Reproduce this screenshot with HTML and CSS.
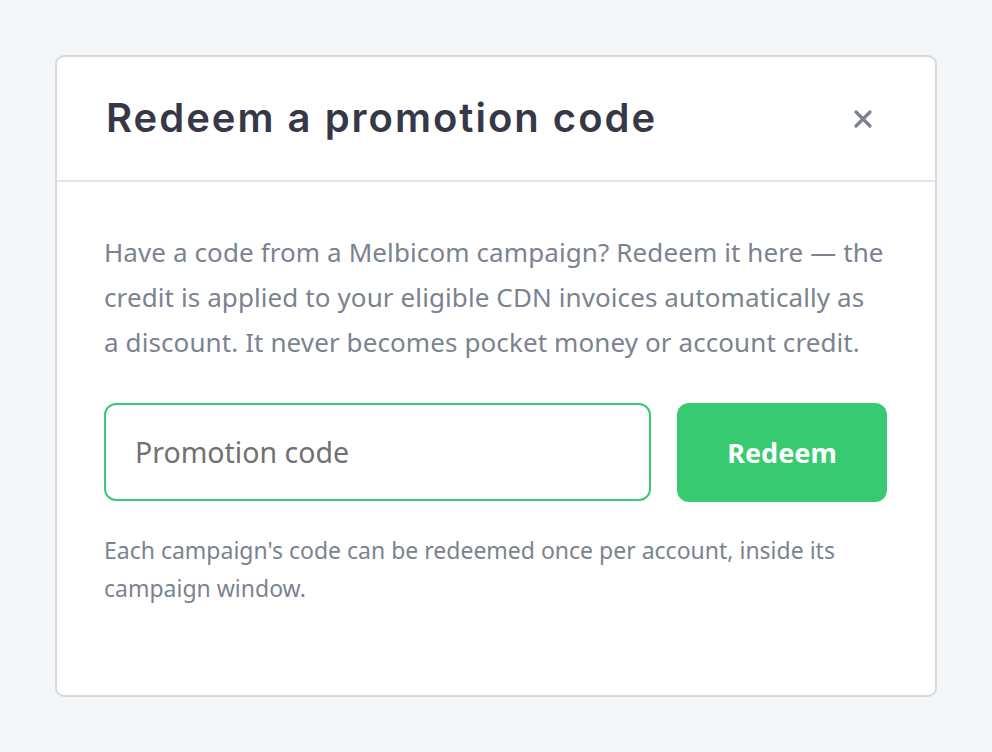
FILE: index.html
```html
<!DOCTYPE html>
<html lang="en">
<head>
<meta charset="utf-8">
<title>Redeem a promotion code</title>
<link rel="stylesheet" href="styles.css">
</head>
<body>
<div class="page">
  <div class="modal">
    <div class="modal-header">
      <h1 class="modal-title">Redeem a promotion code</h1>
      <button class="close-btn" aria-label="Close">
        <svg width="22" height="22" viewBox="0 0 22 22"><path d="M4 4L18 18M18 4L4 18" stroke="#7a808c" stroke-width="3.2" stroke-linecap="round"/></svg>
      </button>
    </div>
    <div class="modal-body">
      <p class="intro">Have a code from a Melbicom campaign? Redeem it here — the credit is applied to your eligible CDN invoices automatically as a&nbsp;discount. It never becomes pocket money or account credit.</p>
      <form class="redeem-form">
        <input class="code-input" type="text" placeholder="Promotion code">
        <button class="redeem-btn" type="button">Redeem</button>
      </form>
      <p class="hint">Each campaign's code can be redeemed once per account, inside its campaign window.</p>
    </div>
  </div>
</div>
</body>
</html>
```
FILE: styles.css
```css
html, body {
  margin: 0;
  padding: 0;
  background: #f5f6f8;
}
.page {
  padding: 55px;
  box-sizing: border-box;
  width: 992px;
  height: 752px;
}
.modal {
  background: #fff;
  border: 2px solid #d5d9e0;
  border-radius: 9px;
  height: 642px;
  box-sizing: border-box;
}
.modal-header {
  height: 125px;
  box-sizing: border-box;
  border-bottom: 2px solid #e3e5ea;
  display: flex;
  align-items: center;
  justify-content: space-between;
  padding: 0 61px 0 49px;
}
.modal-title {
  margin: 0;
  font-family: "Inter", sans-serif;
  font-weight: 600;
  font-size: 40px;
  color: #363848;
  letter-spacing: 2px;
  padding-bottom: 3px;
}
.close-btn {
  border: 0;
  background: none;
  padding: 0;
  width: 22px;
  height: 22px;
  display: flex;
}
.modal-body {
  padding: 48px 48px 0 47px;
  font-family: "Noto Sans", sans-serif;
}
.intro {
  margin: 0;
  font-size: 26px;
  line-height: 45px;
  color: #7b8390;
  letter-spacing: 0.1px;
}
.redeem-form {
  display: flex;
  gap: 26px;
  margin-top: 38px;
}
.code-input {
  flex: 1;
  min-width: 0;
  height: 98px;
  box-sizing: border-box;
  border: 2px solid #3cc971;
  border-radius: 12px;
  padding: 0 29px;
  font-family: "Noto Sans", sans-serif;
  font-size: 28.5px;
  color: #333;
  outline: none;
}
.code-input::placeholder {
  color: #717171;
}
.redeem-btn {
  width: 210px;
  height: 99px;
  border: 0;
  border-radius: 12px;
  background: #37ca70;
  color: #fff;
  font-family: "Noto Sans", sans-serif;
  font-weight: 700;
  font-size: 27px;
}
.hint {
  margin: 29px 0 0;
  font-size: 23px;
  line-height: 38px;
  color: #7b8390;
  letter-spacing: 0;
}
```
